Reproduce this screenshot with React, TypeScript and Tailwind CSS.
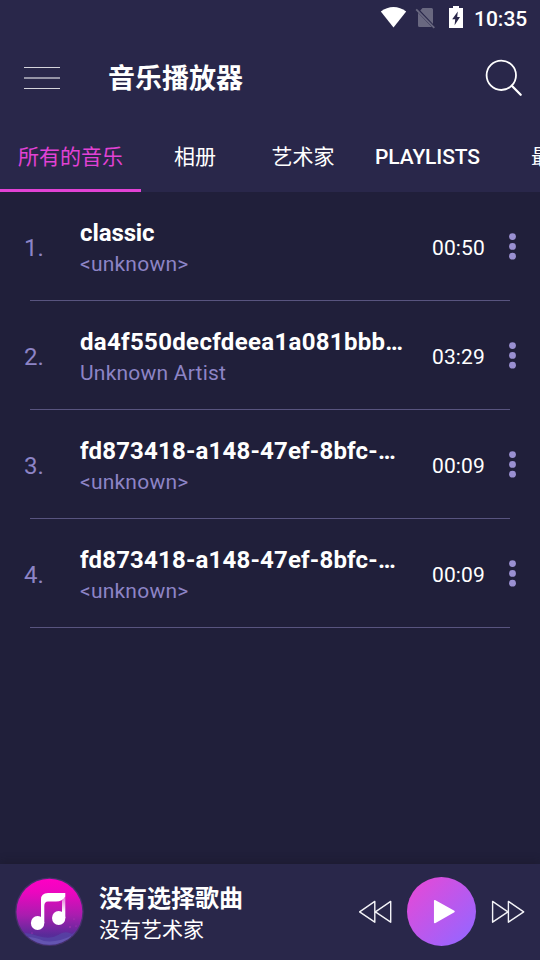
const tabs = ["所有的音乐", "相册", "艺术家", "PLAYLISTS", "最近"];

const songs = [
  { title: "classic", artist: "<unknown>", time: "00:50", tracking: "tracking-[-0.1px]" },
  { title: "da4f550decfdeea1a081bbb…", artist: "Unknown Artist", time: "03:29", tracking: "tracking-[0.32px]" },
  { title: "fd873418-a148-47ef-8bfc-…", artist: "<unknown>", time: "00:09", tracking: "tracking-[0.18px]" },
  { title: "fd873418-a148-47ef-8bfc-…", artist: "<unknown>", time: "00:09", tracking: "tracking-[0.18px]" },
];

function StatusBar() {
  return (
    <div className="flex h-9 items-center justify-end pr-3">
      <svg width="90" height="36" viewBox="378 0 90 36">
        <path d="M380.8 11.6C388.5 5.6 398.5 5.6 406.2 11.6L393.5 27.6Z" fill="#fff" />
        <path d="M422.5 8H431.5Q433 8 433 9.5V24L420.3 10.6ZM418 12.8L431.8 27H419.5Q418 27 418 25.5Z" fill="#696880" />
        <path d="M416.2 9.3L434.3 27.8" stroke="#696880" strokeWidth="1.8" />
        <path d="M453 6H459V8H463V28H449V8H453ZM457.8 11.5L452.2 19.2H455.2L454.6 25.2L460 17H457.2Z" fill="#fff" fillRule="evenodd" />
      </svg>
      <span className="ml-[6px] w-[54px] pt-0.5 text-[21px] leading-6 font-medium whitespace-nowrap">10:35</span>
    </div>
  );
}

function Toolbar() {
  return (
    <div className="flex h-21 items-center pr-4 pl-6">
      <svg width="36" height="24" viewBox="0 0 36 24" shapeRendering="crispEdges">
        <path d="M0 1h36v1H0zM0 22h36v1H0z" fill="#d4d4db" />
        <path d="M0 11h36v2H0z" fill="#9493a5" />
      </svg>
      <h1 className="ml-12 flex-1 pt-0.5 text-[27px] leading-9 font-bold">音乐播放器</h1>
      <svg width="40" height="40" viewBox="484 58 40 40" fill="none" stroke="#fff">
        <circle cx="501.3" cy="75.3" r="14.7" strokeWidth="1.8" />
        <path d="M511.8 85.8L520.7 94.7" strokeWidth="2.3" strokeLinecap="round" />
      </svg>
    </div>
  );
}

type Song = { index: number; title: string; artist: string; time: string; tracking: string };

function SongRow({ index, title, artist, time, tracking }: Song) {
  return (
    <li className="flex h-[109px] flex-col">
      <div className="flex flex-1 items-center pl-6">
        <span className="w-14 pt-1 text-2xl text-[#8d84c6]">{index}.</span>
        <div className="w-[327px] pt-[3px]">
          <div className={`text-2xl leading-7 font-bold whitespace-nowrap ${tracking}`}>{title}</div>
          <div className="mt-[5px] text-[21px] leading-6 tracking-[0.22px] text-[#8d84c6]">{artist}</div>
        </div>
        <span className="ml-[25px] w-14 pt-[5px] text-[21px] tracking-[0.1px]">{time}</span>
        <svg className="ml-[20px]" width="9" height="30" viewBox="0 0 9 30" fill="#9a90d2">
          <circle cx="4.5" cy="5.6" r="3.4" />
          <circle cx="4.5" cy="15.4" r="3.4" />
          <circle cx="4.5" cy="25.2" r="3.4" />
        </svg>
      </div>
      <div className="mx-[30px] h-px bg-[#58547f]" />
    </li>
  );
}

function AlbumArt() {
  return (
    <svg width="70" height="70" viewBox="0 0 70 70">
      <defs>
        <linearGradient id="art" x1="0" y1="0" x2="0" y2="1">
          <stop offset="0" stopColor="#ff00c4" />
          <stop offset="0.2" stopColor="#ec06bf" />
          <stop offset="0.55" stopColor="#a91daf" />
          <stop offset="0.85" stopColor="#592b99" />
          <stop offset="1" stopColor="#4a369d" />
        </linearGradient>
        <linearGradient id="stem" x1="0" y1="0" x2="0" y2="1">
          <stop offset="0" stopColor="#fff" stopOpacity="0.4" />
          <stop offset="0.7" stopColor="#fff" />
        </linearGradient>
        <clipPath id="disc"><circle cx="35.4" cy="34.8" r="33" /></clipPath>
      </defs>
      <circle cx="35.4" cy="34.8" r="34.3" fill="#46316b" />
      <circle cx="35.4" cy="34.8" r="33" fill="url(#art)" />
      <g clipPath="url(#disc)">
        <path d="M0 57Q12 54 24 59Q36 63 44 58Q51 53 58 57L70 49V70H0Z" fill="#5649a8" opacity="0.65" />
        <path d="M5 61Q17 58 30 64Q43 66 57 59V70H5Z" fill="#7668bd" opacity="0.5" />
      </g>
      <path d="M27 46V22.5Q27 16 34 16H51.3V19.5Q48.5 24.5 42 24.5H34Q30.3 24.5 30.3 29V46Z" fill="#fff" />
      <path d="M48 23.5L51.3 19.5V41H48Z" fill="url(#stem)" />
      <ellipse cx="23.6" cy="46" rx="6.7" ry="7" fill="#fff" />
      <ellipse cx="44.7" cy="41" rx="6.7" ry="7" fill="#fff" />
      <g fill="#c13bbd"><circle cx="60" cy="42" r=".6" /><circle cx="56" cy="50" r=".7" /><circle cx="62" cy="49" r=".5" /><circle cx="18" cy="56" r=".6" /></g>
    </svg>
  );
}

function PlayerBar() {
  return (
    <footer className="flex h-24 items-center bg-[#29274a] pl-[14px] shadow-[0_-2px_8px_rgba(25,23,35,0.4)]">
      <AlbumArt />
      <div className="ml-[15px] flex-1 pt-[5px]">
        <div className="text-2xl leading-8 font-bold">没有选择歌曲</div>
        <div className="text-[21px] leading-[31px]">没有艺术家</div>
      </div>
      <svg width="182" height="96" viewBox="358 864 182 96">
        <defs>
          <linearGradient id="play" x1="0.1" y1="0.1" x2="0.9" y2="0.9">
            <stop offset="0" stopColor="#e24ad9" />
            <stop offset="1" stopColor="#9765ff" />
          </linearGradient>
        </defs>
        <g fill="none" stroke="#f3f3f7" strokeWidth="1.4" strokeLinejoin="round">
          <path d="M359.6 911.8L374.8 901.4V922.2ZM375.4 911.8L390.7 901.4V922.2Z" />
          <path d="M523.7 911.8L508.4 901.4V922.2ZM507.9 911.8L492.6 901.4V922.2Z" />
        </g>
        <circle cx="441.5" cy="911.5" r="34.5" fill="url(#play)" />
        <path d="M434.7 900.7L454 911.5L434.7 922.5Z" fill="#fff" stroke="#fff" strokeWidth="1.5" strokeLinejoin="round" />
      </svg>
    </footer>
  );
}

export default function App() {
  return (
    <div className="flex h-[960px] w-[540px] flex-col overflow-hidden bg-[#201f3a] font-[Roboto,'Noto_Sans_CJK_SC',sans-serif] text-white">
      <header className="h-48 bg-[#29274a]">
        <StatusBar />
        <Toolbar />
        <nav className="flex h-18 overflow-hidden">
          {tabs.map((tab, i) => (
            <div
              key={tab}
              className={`flex min-w-[108px] shrink-0 items-center justify-center border-b-3 px-[18px] pt-1.5 text-[21px] whitespace-nowrap ${
                i === 0 ? "border-[#e242d5] text-[#e242d5]" : "border-transparent"
              } ${tab === "PLAYLISTS" ? "font-medium tracking-[-0.1px]" : "font-normal"}`}
            >
              {tab}
            </div>
          ))}
        </nav>
      </header>
      <ul className="flex-1">
        {songs.map((song, i) => (
          <SongRow key={i} index={i + 1} {...song} />
        ))}
      </ul>
      <PlayerBar />
    </div>
  );
}
